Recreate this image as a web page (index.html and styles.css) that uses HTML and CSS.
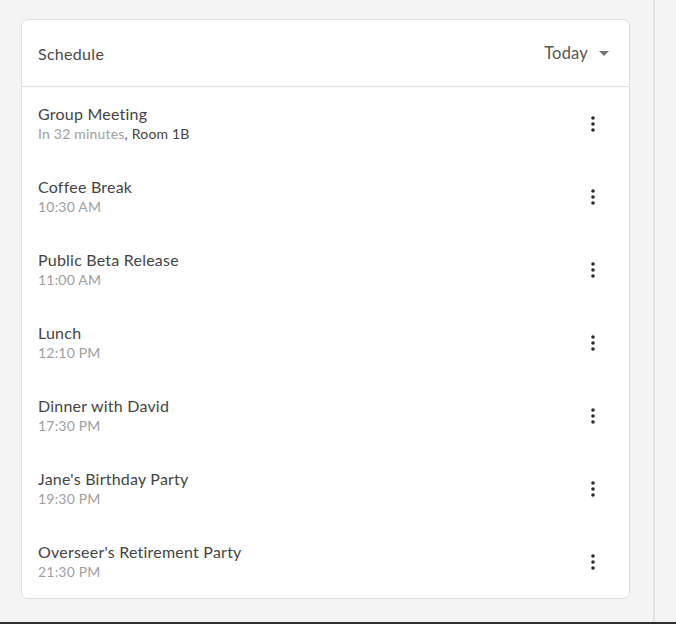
FILE: index.html
```html
<!DOCTYPE html>
<html>
<head>
<meta charset="utf-8">
<link rel="stylesheet" href="styles.css">
</head>
<body>
<div class="page">
  <main class="main">
    <section class="card">
      <header class="card-head">
        <span class="card-title">Schedule</span>
        <span class="select">Today <svg class="caret" width="24" height="24" viewBox="0 0 24 24"><path d="M7 10l5 5 5-5z" fill="#757575"/></svg></span>
      </header>
      <ul class="list">
        <li class="item"><div class="text"><div class="t">Group Meeting</div><div class="s">In 32 minutes<span class="dark">, Room 1B</span></div></div><svg class="more" width="24" height="24" viewBox="0 0 24 24"><circle cx="12" cy="6" r="1.8"/><circle cx="12" cy="12" r="1.8"/><circle cx="12" cy="18" r="1.8"/></svg></li>
        <li class="item"><div class="text"><div class="t">Coffee Break</div><div class="s">10:30 AM</div></div><svg class="more" width="24" height="24" viewBox="0 0 24 24"><circle cx="12" cy="6" r="1.8"/><circle cx="12" cy="12" r="1.8"/><circle cx="12" cy="18" r="1.8"/></svg></li>
        <li class="item"><div class="text"><div class="t">Public Beta Release</div><div class="s">11:00 AM</div></div><svg class="more" width="24" height="24" viewBox="0 0 24 24"><circle cx="12" cy="6" r="1.8"/><circle cx="12" cy="12" r="1.8"/><circle cx="12" cy="18" r="1.8"/></svg></li>
        <li class="item"><div class="text"><div class="t">Lunch</div><div class="s">12:10 PM</div></div><svg class="more" width="24" height="24" viewBox="0 0 24 24"><circle cx="12" cy="6" r="1.8"/><circle cx="12" cy="12" r="1.8"/><circle cx="12" cy="18" r="1.8"/></svg></li>
        <li class="item"><div class="text"><div class="t">Dinner with David</div><div class="s">17:30 PM</div></div><svg class="more" width="24" height="24" viewBox="0 0 24 24"><circle cx="12" cy="6" r="1.8"/><circle cx="12" cy="12" r="1.8"/><circle cx="12" cy="18" r="1.8"/></svg></li>
        <li class="item"><div class="text"><div class="t">Jane's Birthday Party</div><div class="s">19:30 PM</div></div><svg class="more" width="24" height="24" viewBox="0 0 24 24"><circle cx="12" cy="6" r="1.8"/><circle cx="12" cy="12" r="1.8"/><circle cx="12" cy="18" r="1.8"/></svg></li>
        <li class="item"><div class="text"><div class="t">Overseer's Retirement Party</div><div class="s">21:30 PM</div></div><svg class="more" width="24" height="24" viewBox="0 0 24 24"><circle cx="12" cy="6" r="1.8"/><circle cx="12" cy="12" r="1.8"/><circle cx="12" cy="18" r="1.8"/></svg></li>
      </ul>
    </section>
  </main>
  <aside class="side"></aside>
</div>
</body>
</html>
```
FILE: styles.css
```css
html, body {
  margin: 0;
  padding: 0;
  height: 100%;
  background: #f4f4f4;
  font-family: "Lato", "Noto Sans", sans-serif;
}
.page {
  display: flex;
  height: 622px;
  border-bottom: 2px solid #2e2e2e;
  overflow: hidden;
}
.main {
  width: 653px;
  padding: 19px 0 0 21px;
  box-sizing: border-box;
}
.side {
  width: 2px;
  background: #e4e4e4;
}
.card {
  width: 609px;
  background: #fff;
  border: 1px solid #e0e0e0;
  border-radius: 7px;
  box-sizing: border-box;
}
.card-head {
  height: 66px;
  display: flex;
  align-items: center;
  justify-content: space-between;
  padding: 0 13px 0 16px;
  border-bottom: 1px solid #e0e0e0;
  color: #4a4a4a;
  font-size: 16px;
  letter-spacing: 0.3px;
}
.select {
  display: flex;
  align-items: center;
  color: #555;
  font-size: 16.5px;
  letter-spacing: 0.2px;
}
.caret {
  margin-left: 4px;
}
.list {
  list-style: none;
  margin: 0;
  padding: 0;
}
.item {
  height: 73px;
  display: flex;
  align-items: center;
  justify-content: space-between;
  padding: 0 24px 0 16px;
}
.t {
  font-size: 16px;
  color: #444;
  line-height: 20px;
  margin-top: 0;
  letter-spacing: 0.22px;
}
.s {
  font-size: 14px;
  color: #9e9e9e;
  line-height: 18px;
  margin-top: 1px;
  letter-spacing: 0.2px;
}
.dark {
  color: #444;
}
.more {
  fill: #2a2a2a;
}
```
